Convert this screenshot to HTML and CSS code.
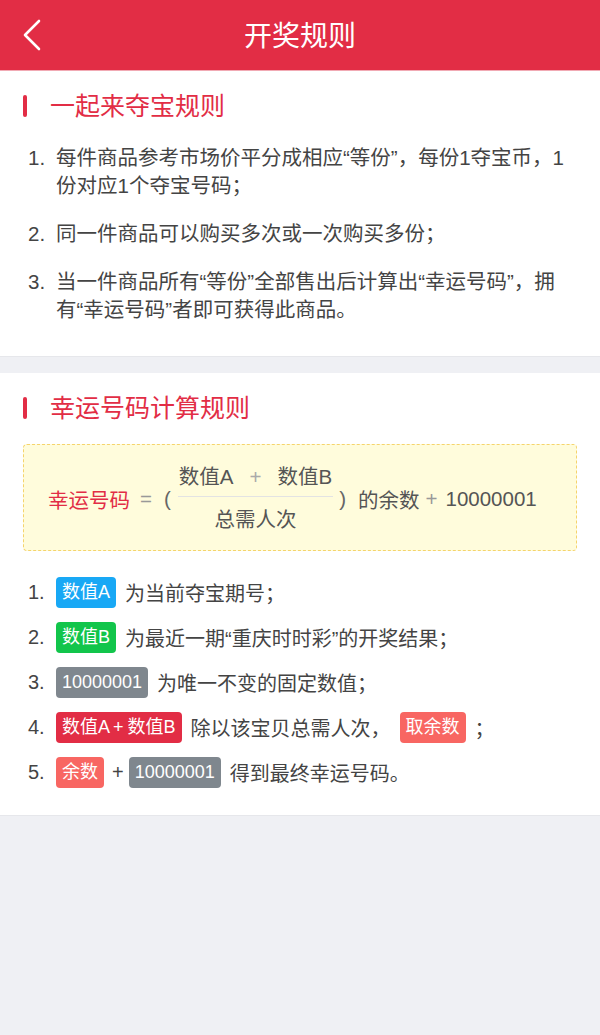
FILE: index.html
```html
<!DOCTYPE html>
<html lang="zh-CN">
<head>
    <meta charset="UTF-8">
    <meta name="viewport" content="width=device-width, initial-scale=1.0">
    <title>开奖规则</title>
    <link rel="stylesheet" href="styles.css">
</head>
<body>
    <header class="topbar">
        <a class="back" href="#">
            <svg width="18" height="32" viewBox="0 0 18 32">
                <polyline points="16,2 2,16 16,30" fill="none" stroke="#fff" stroke-width="2.6" stroke-linecap="round" stroke-linejoin="round"/>
            </svg>
        </a>
        <h1>开奖规则</h1>
    </header>

    <section class="panel">
        <h2 class="panel-title">一起来夺宝规则</h2>
        <ol class="rules">
            <li><span class="num">1.</span><span class="txt">每件商品参考市场价平分成相应“等份”，每份1夺宝币，1份对应1个夺宝号码；</span></li>
            <li><span class="num">2.</span><span class="txt">同一件商品可以购买多次或一次购买多份；</span></li>
            <li><span class="num">3.</span><span class="txt">当一件商品所有“等份”全部售出后计算出“幸运号码”，拥有“幸运号码”者即可获得此商品。</span></li>
        </ol>
    </section>

    <section class="panel">
        <h2 class="panel-title">幸运号码计算规则</h2>
        <div class="formula">
            <span class="lucky">幸运号码</span>
            <span class="op eq">=</span>
            <span class="paren">(</span>
            <span class="frac">
                <span class="frac-top">数值A<span class="op plus-in">+</span>数值B</span>
                <span class="frac-bottom">总需人次</span>
            </span>
            <span class="paren close">)</span>
            <span class="rest">的余数</span>
            <span class="op">+</span>
            <span class="const">10000001</span>
        </div>
        <ol class="steps">
            <li><span class="num">1.</span><span class="tag blue">数值A</span><span>为当前夺宝期号；</span></li>
            <li><span class="num">2.</span><span class="tag green">数值B</span><span>为最近一期“重庆时时彩”的开奖结果；</span></li>
            <li><span class="num">3.</span><span class="tag gray">10000001</span><span>为唯一不变的固定数值；</span></li>
            <li><span class="num">4.</span><span class="tag red">数值A + 数值B</span><span>除以该宝贝总需人次，</span><span class="tag salmon">取余数</span><span>；</span></li>
            <li><span class="num">5.</span><span class="tag salmon">余数</span><span class="sign">+</span><span class="tag gray">10000001</span><span>得到最终幸运号码。</span></li>
        </ol>
    </section>
</body>
</html>
```

FILE: styles.css
```css
body {
    margin: 0;
    background-color: #eff0f4;
    font-family: "Liberation Sans", "Noto Sans CJK SC", sans-serif;
    color: #444;
}
.topbar {
    display: grid;
    grid-template-columns: 70px 1fr 70px;
    align-items: center;
    height: 70px;
    background-color: #e22d45;
    border-bottom: 1px solid #f1aab4;
}
.back {
    display: flex;
    padding-left: 23px;
}
.topbar h1 {
    margin: 0 0 2px;
    text-align: center;
    color: #fff;
    font-size: 28px;
    font-weight: normal;
}
.panel {
    background-color: #fff;
    padding: 20px 23px 32px;
    border-bottom: 1px solid #e6e7eb;
}
.panel + .panel {
    margin-top: 16px;
    padding-bottom: 27px;
}
.panel-title {
    display: flex;
    align-items: center;
    gap: 23px;
    margin: 0;
    font-size: 25px;
    line-height: 30px;
    font-weight: normal;
    color: #e22d45;
}
.panel-title::before {
    content: "";
    width: 4px;
    height: 22px;
    border-radius: 2px;
    background-color: #e22d45;
}
.rules, .steps {
    list-style: none;
    margin: 23px 0 0;
    padding: 0 5px;
}
.rules li {
    display: flex;
    font-size: 20.5px;
    line-height: 28px;
}
.rules li + li {
    margin-top: 20px;
}
.num {
    flex: none;
    width: 28px;
}
.formula {
    display: flex;
    align-items: center;
    height: 103px;
    margin-top: 21px;
    padding: 2px 24px 0;
    border: 1px dashed #f5d46c;
    border-radius: 4px;
    background-color: #fffcdc;
    font-size: 20.5px;
    color: #555;
}
.lucky {
    color: #e22d45;
}
.op {
    color: #999;
    margin-left: 6px;
}
.eq {
    margin-left: 10px;
}
.paren {
    color: #666;
    margin-left: 12px;
}
.paren.close {
    margin-left: 6px;
}
.frac {
    display: flex;
    flex-direction: column;
    align-items: center;
    margin-left: 7px;
    line-height: 24px;
}
.frac-top {
    padding: 0 1px 7px;
    border-bottom: 1px solid #e3e3e3;
}
.plus-in {
    color: #aaa;
    margin: 0 16px;
}
.frac-bottom {
    padding-top: 11px;
}
.rest {
    margin-left: 12px;
}
.const {
    margin-left: 8px;
}
.steps {
    margin-top: 26px;
}
.steps li {
    display: flex;
    align-items: center;
    gap: 9px;
    height: 31px;
    font-size: 20px;
}
.steps li + li {
    margin-top: 14px;
}
.steps .num {
    width: 19px;
}
.tag {
    height: 31px;
    line-height: 31px;
    padding: 0 6px;
    border-radius: 4px;
    color: #fff;
    font-size: 18px;
    word-spacing: -1px;
}
.sign {
    margin: 0 -4px 0 -1px;
}
.blue {
    background-color: #18a8f5;
}
.green {
    background-color: #12c54b;
}
.gray {
    background-color: #7f878e;
}
.red {
    background-color: #e22d45;
}
.salmon {
    background-color: #f86662;
}
```
